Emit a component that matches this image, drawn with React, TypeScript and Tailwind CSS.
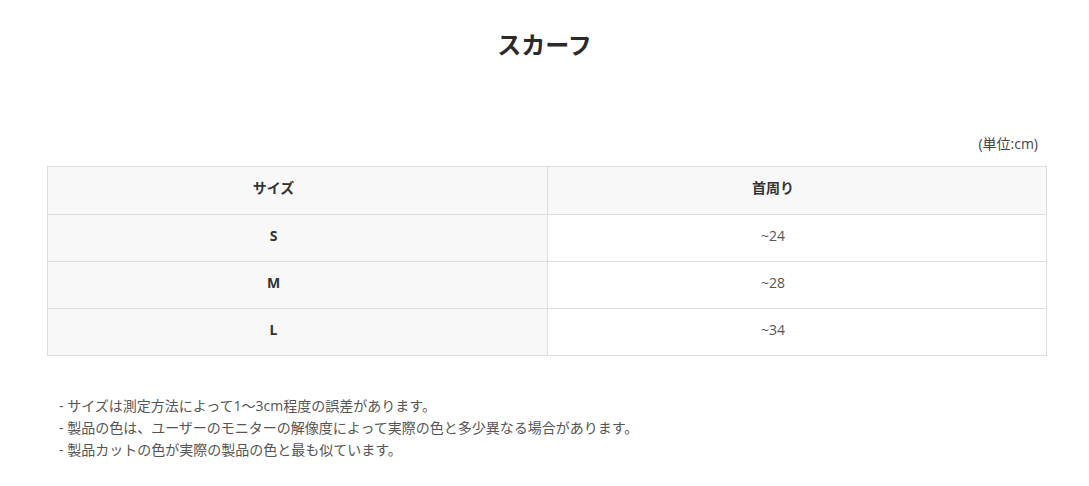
const ROWS = [
  { size: 'S', neck: '~24' },
  { size: 'M', neck: '~28' },
  { size: 'L', neck: '~34' },
];

const NOTES = [
  '- サイズは測定方法によって1～3cm程度の誤差があります。',
  '- 製品の色は、ユーザーのモニターの解像度によって実際の色と多少異なる場合があります。',
  '- 製品カットの色が実際の製品の色と最も似ています。',
];

export default function App() {
  return (
    <div
      className="w-[1089px] h-[486px] bg-white text-[#333]"
      style={{ fontFamily: '"Open Sans", "Noto Sans CJK JP", sans-serif' }}
    >
      {/* Title */}
      <h1 className="pt-[28px] text-center text-[24px] font-bold leading-[34px] text-[#2b2b2b]">スカーフ</h1>

      <div className="ml-[47px] w-[1000px] pt-[72px]">
        {/* Unit */}
        <div className="pr-[9px] text-right text-[14px] leading-[20px] text-[#444]">(単位:cm)</div>

        {/* Size table */}
        <table className="mt-[12px] w-full border-collapse border border-[#dddddd] text-[14px]">
          <thead>
            <tr className="h-[48px] bg-[#f8f8f8]">
              <th className="w-[500px] border border-[#dddddd] pr-[48px] pb-[6px] font-bold text-[#333]">サイズ</th>
              <th className="border border-[#dddddd] pr-[48px] pb-[6px] font-bold text-[#333]">首周り</th>
            </tr>
          </thead>
          <tbody>
            {ROWS.map((r) => (
              <tr key={r.size} className="h-[47px]">
                <td className="border border-[#dddddd] bg-[#f8f8f8] pr-[48px] pb-[6px] text-center font-bold text-[#333]">{r.size}</td>
                <td className="border border-[#dddddd] bg-white pr-[48px] pb-[6px] text-center text-[#555]">{r.neck}</td>
              </tr>
            ))}
          </tbody>
        </table>

        {/* Notes */}
        <div className="mt-[39px] pl-[12px] text-[14px] leading-[22px] text-[#555]">
          {NOTES.map((n) => (
            <div key={n}>{n}</div>
          ))}
        </div>
      </div>
    </div>
  );
}
